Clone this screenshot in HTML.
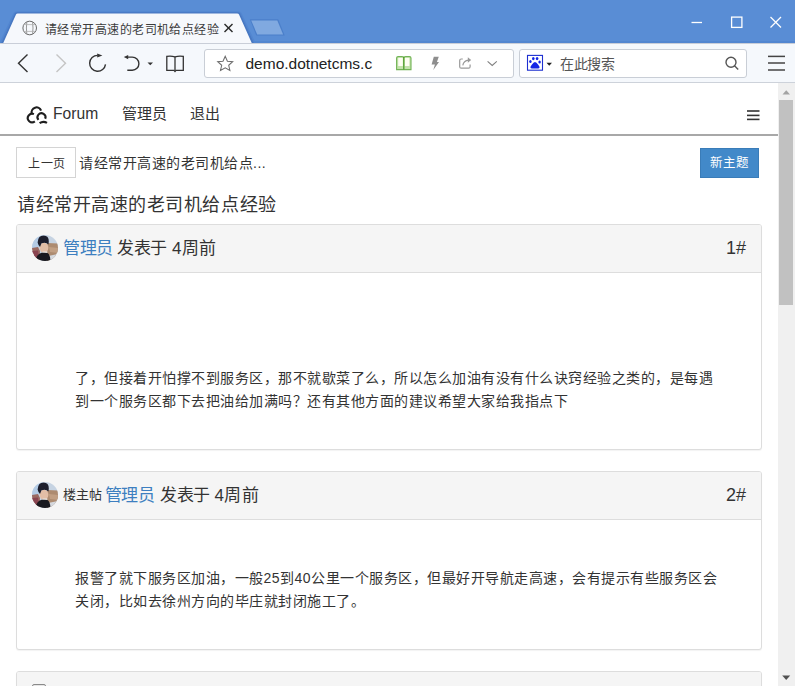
<!DOCTYPE html>
<html lang="zh-CN"><head><meta charset="utf-8">
<style>
*{margin:0;padding:0;box-sizing:border-box}
html,body{width:800px;height:686px;overflow:hidden;background:#fff;font-family:"Liberation Sans",sans-serif;color:#333}
.a{position:absolute}
.nw{white-space:nowrap}
.panel{position:absolute;left:16px;width:746px;border:1px solid #ddd;border-radius:3px;background:#fff;box-shadow:0 1px 1px rgba(0,0,0,.05)}
.ph{position:absolute;left:0;top:0;right:0;background:#f5f5f5;border-bottom:1px solid #ddd;border-radius:2px 2px 0 0}
.txt{font-size:14px;letter-spacing:.5px;line-height:23px;color:#333}
.hd{font-size:17px;letter-spacing:-.35px;line-height:20px;color:#333}
</style></head><body>
<!-- title bar -->
<div class="a" style="left:0;top:0;width:795px;height:43px;background:#598dd5"></div>
<div class="a" style="left:0;top:41px;width:795px;height:2px;background:#5286d0"></div>
<svg class="a" style="left:0;top:0" width="800" height="44">
  <path d="M-1 44 L13.5 13 Q14.5 11.3 17 11.3 L238 11.3 Q240.5 11.3 241.5 13 L256 44 Z" fill="#5286d0"/><path d="M0.8 44 L14.8 13.6 Q15.5 12.2 17.5 12.2 L237.5 12.2 Q239.5 12.2 240.2 13.6 L254.3 44 Z" fill="#4878c2"/>
  <path d="M2.8 44 L16 14.5 Q16.4 13.5 17.8 13.5 L237.2 13.5 Q238.6 13.5 239 14.5 L252.2 44 Z" fill="#f6f8fc"/>
  <path d="M249.8 19.3 L278.2 19.3 L284.8 35.5 L256.3 35.5 Z" fill="#4b7fca"/><path d="M251.2 20.4 L277.3 20.4 L283.1 34.4 L257.2 34.4 Z" fill="#80a9e0"/>
  <!-- globe -->
  <g fill="none" stroke="#6a6a6a" stroke-width="1">
    <circle cx="29.7" cy="28" r="6.8"/>
  </g>
  <g fill="none" stroke="#8c8c8c" stroke-width="0.9">
    <path d="M26.8 22 Q26 28 26.8 34"/><path d="M32.6 22 Q33.4 28 32.6 34"/>
  </g>
  <g fill="none" stroke="#b0b0b0" stroke-width="0.8">
    <line x1="24.2" y1="24.6" x2="35.2" y2="24.6"/><line x1="24.2" y1="31.4" x2="35.2" y2="31.4"/>
  </g>
  <!-- close x -->
  <g stroke="#2a2a2a" stroke-width="1.4">
    <line x1="224.5" y1="24" x2="232.5" y2="32"/><line x1="232.5" y1="24" x2="224.5" y2="32"/>
  </g>
  <!-- window controls -->
  <g stroke="#fff" stroke-width="1.3" fill="none">
    <line x1="691.5" y1="22.5" x2="702" y2="22.5"/>
    <rect x="731.6" y="17.1" width="10.3" height="10.3"/>
    <line x1="770.5" y1="17" x2="781" y2="27.5"/><line x1="781" y1="17" x2="770.5" y2="27.5"/>
  </g>
</svg>
<div class="a nw" style="left:45px;top:22px;font-size:12px;letter-spacing:.45px;line-height:16px;color:#3c3c3c">请经常开高速的老司机给点经验</div>
<!-- toolbar -->
<div class="a" style="left:0;top:43px;width:795px;height:40px;background:#f5f8fc;border-top:1px solid #c9ced8;border-bottom:1px solid #cdd2da"></div>
<svg class="a" style="left:0;top:43px" width="800" height="40">
  <polyline points="27.5,11.5 18.5,20.2 27.5,29" fill="none" stroke="#333" stroke-width="1.4"/>
  <polyline points="56.5,11.5 65.5,20.2 56.5,29" fill="none" stroke="#c5c5c5" stroke-width="1.4"/>
  <!-- reload -->
  <path d="M97.6 12.35 A7.95 7.95 0 1 0 105.5 21.3" fill="none" stroke="#333" stroke-width="1.4"/>
  <path d="M97.2 10.4 L102.4 12.4 L97.2 14.6 Z" fill="#333"/>
  <!-- undo -->
  <path d="M126.5 14.1 L132.3 14.1 A6.6 6.6 0 0 1 132.3 27.3 L127.3 27.3" fill="none" stroke="#333" stroke-width="1.4"/>
  <path d="M123.8 14.1 L128.2 11.9 L128.2 16.3 Z" fill="#333"/>
  <path d="M147.5 19.5 L153 19.5 L150.25 22.3 Z" fill="#333"/>
  <!-- book -->
  <g fill="none" stroke="#333" stroke-width="1.3">
    <path d="M166.8 13.4 Q171 12.6 175 13.9 Q179 12.6 183.3 13.4 L183.3 27.4 L176 27.4 L175 28.5 L174 27.4 L166.8 27.4 Z"/>
    <line x1="175" y1="13.9" x2="175" y2="27.6"/>
  </g>
</svg>
<!-- address box -->
<div class="a" style="left:204px;top:49px;width:310px;height:28.5px;background:#fff;border:1px solid #c9ced6;border-radius:3px"></div>
<svg class="a" style="left:204px;top:49px" width="310" height="28">
  <path d="M21.2 7.3 L23.4 12.2 L28.7 12.7 L24.7 16.3 L25.9 21.5 L21.2 18.8 L16.5 21.5 L17.7 16.3 L13.7 12.7 L19 12.2 Z" fill="none" stroke="#6d6d6d" stroke-width="1.05"/>
  <!-- green book -->
  <path d="M192.6 9 Q192.6 7.6 194.2 7.6 L198 7.6 Q199.8 7.6 199.8 9 Q199.8 7.6 201.6 7.6 L205.4 7.6 Q207 7.6 207 9 L207 20.6 L192.6 20.6 Z" fill="#c3e2ab" stroke="#72b356" stroke-width="1.1"/>
  <rect x="194.2" y="8.8" width="4.6" height="8.2" fill="#fdfdf2"/>
  <rect x="200.8" y="8.8" width="4.6" height="8.2" fill="#fdfdf2"/>
  <line x1="199.8" y1="8" x2="199.8" y2="20.6" stroke="#4e9c2b" stroke-width="1.3"/>
  <!-- lightning -->
  <path d="M229.8 7.8 L234.8 7.8 L232.9 13 L235 13 L229.3 21 L230.9 15.6 L227.6 15.6 Z" fill="#8e8e8e"/>
  <!-- share -->
  <g fill="none" stroke="#999" stroke-width="1.2">
    <path d="M258.8 10 L257.2 10 Q255.7 10 255.7 11.5 L255.7 17.7 Q255.7 19.2 257.2 19.2 L264.6 19.2 Q266.1 19.2 266.1 17.7 L266.1 15.6"/>
    <path d="M258.8 16.4 Q259.6 11.6 264.6 11.1"/>
  </g>
  <path d="M263.8 8.3 L267.2 11.1 L263.8 13.8 Z" fill="#999"/>
  <polyline points="283.6,12.4 288.2,16.5 292.8,12.4" fill="none" stroke="#808080" stroke-width="1.1"/>
</svg>
<div class="a nw" style="left:245.5px;top:53.5px;font-size:15.5px;line-height:20px;color:#222">demo.dotnetcms.c</div>
<!-- search box -->
<div class="a" style="left:519px;top:49px;width:228px;height:28.5px;background:#fff;border:1px solid #c9ced6;border-radius:3px"></div>
<svg class="a" style="left:519px;top:49px" width="228" height="28">
  <rect x="8.5" y="6.4" width="15" height="14.8" fill="#fff" stroke="#1d2fd0" stroke-width="1.1"/>
  <g fill="#1426e6">
    <ellipse cx="14.3" cy="9.6" rx="1.3" ry="1.6"/><ellipse cx="18.1" cy="9.6" rx="1.3" ry="1.6"/>
    <ellipse cx="11.4" cy="12.6" rx="1.2" ry="1.5"/><ellipse cx="20.6" cy="13.1" rx="1.2" ry="1.5"/>
    <path d="M16 12.9 Q14.5 13 13 15.5 L11.6 17.4 Q10.8 19.3 12.8 19.4 L19.2 19.4 Q21.2 19.3 20.4 17.4 L19 15.5 Q17.5 13 16 12.9 Z"/>
  </g>
  <path d="M27.5 13.8 L33 13.8 L30.25 16.7 Z" fill="#222"/>
  <g fill="none" stroke="#555" stroke-width="1.4">
    <circle cx="212" cy="13.3" r="5"/><line x1="215.5" y1="16.8" x2="219.2" y2="20.5"/>
  </g>
</svg>
<div class="a nw" style="left:560px;top:55px;font-size:14px;letter-spacing:-.5px;line-height:18px;color:#555">在此搜索</div>
<svg class="a" style="left:760px;top:43px" width="35" height="40">
  <g stroke="#444" stroke-width="1.5"><line x1="8" y1="13.4" x2="25" y2="13.4"/><line x1="8" y1="20" x2="25" y2="20"/><line x1="8" y1="27" x2="25" y2="27"/></g>
</svg>
<div class="a" style="left:795px;top:0;width:5px;height:686px;background:#fff"></div>

<!-- nav -->
<svg class="a" style="left:20px;top:100px" width="32" height="30">
  <g fill="none" stroke="#1e1e1e" stroke-width="2.1">
    <path d="M11.77 13.52 A4.90 4.90 0 0 1 21.10 10.57"/>
    <path d="M13.92 14.10 A4.30 4.30 0 1 0 14.81 21.34"/>
    <path d="M18.48 19.87 A4.00 4.00 0 1 1 25.21 18.75"/>
    <path d="M19.6 23.2 Q23.2 20.6 27 22.9"/>
  </g>
</svg>
<div class="a nw" style="left:52.5px;top:104px;font-size:17px;line-height:20px;color:#333;transform:scaleX(.92);transform-origin:0 0">Forum</div>
<div class="a nw" style="left:122px;top:104px;font-size:15px;line-height:20px;color:#333">管理员</div>
<div class="a nw" style="left:190px;top:104px;font-size:15px;line-height:20px;color:#333">退出</div>
<svg class="a" style="left:745px;top:105px" width="16" height="20">
  <g stroke="#333" stroke-width="1.6"><line x1="2" y1="6" x2="14.5" y2="6"/><line x1="2" y1="10.4" x2="14.5" y2="10.4"/><line x1="2" y1="14.4" x2="14.5" y2="14.4"/></g>
</svg>
<div class="a" style="left:0;top:134px;width:778px;height:2px;background:#a8a8a8"></div>

<div class="a" style="left:16px;top:147px;width:60px;height:31px;border:1px solid #d4d4d4;background:#fff"></div>
<div class="a nw" style="left:28px;top:156px;font-size:12px;letter-spacing:.5px;line-height:16px;color:#333">上一页</div>
<div class="a nw" style="left:79px;top:154px;font-size:14px;letter-spacing:.5px;line-height:18px;color:#333">请经常开高速的老司机给点...</div>
<div class="a" style="left:700px;top:147.5px;width:59px;height:30.5px;border:1px solid #3a7cb8;background:#4289c9"></div>
<div class="a nw" style="left:710px;top:155px;font-size:12.5px;line-height:16px;color:#fff">新主题</div>
<div class="a nw" style="left:17px;top:193.5px;font-size:18px;letter-spacing:.55px;line-height:22px;color:#333">请经常开高速的老司机给点经验</div>

<!-- panel 1 -->
<div class="panel" style="top:224px;height:226px"><div class="ph" style="height:48px"></div></div>
<svg class="a" style="left:32px;top:235px" width="26" height="26"><use href="#avatar"/></svg>
<div class="a nw hd" style="left:63px;top:239px;color:#3d7fc0">管理员</div>
<div class="a nw hd" style="left:117px;top:239px">发表于</div>
<div class="a nw hd" style="left:172px;top:239px;letter-spacing:.3px">4周前</div>
<div class="a nw" style="left:726px;top:237.5px;font-size:18px;line-height:20px">1#</div>
<div class="a nw txt" style="left:75px;top:367px">了，但接着开怕撑不到服务区，那不就歇菜了么，所以怎么加油有没有什么诀窍经验之类的，是每遇</div>
<div class="a nw txt" style="left:75px;top:390px">到一个服务区都下去把油给加满吗？还有其他方面的建议希望大家给我指点下</div>

<!-- panel 2 -->
<div class="panel" style="top:471px;height:179px"><div class="ph" style="height:48px"></div></div>
<svg class="a" style="left:32px;top:482px" width="26" height="26"><use href="#avatar"/></svg>
<div class="a nw" style="left:63px;top:487px;font-size:13px;line-height:16px">楼主帖</div>
<div class="a nw hd" style="left:104.5px;top:486px;color:#3d7fc0">管理员</div>
<div class="a nw hd" style="left:160px;top:486px">发表于</div>
<div class="a nw hd" style="left:214.5px;top:486px;letter-spacing:.3px">4周前</div>
<div class="a nw" style="left:726px;top:484.5px;font-size:18px;line-height:20px">2#</div>
<div class="a nw txt" style="left:75px;top:567px">报警了就下服务区加油，一般25到40公里一个服务区，但最好开导航走高速，会有提示有些服务区会</div>
<div class="a nw txt" style="left:75px;top:590px">关闭，比如去徐州方向的毕庄就封闭施工了。</div>

<!-- panel 3 -->
<div class="panel" style="top:671px;height:60px"><div class="ph" style="height:48px"></div></div>
<div class="a" style="left:32px;top:684px;width:13.5px;height:10px;border:1.3px solid #8a8a8a;border-radius:2px;background:#e6e6e6"></div>

<!-- scrollbar -->
<div class="a" style="left:778px;top:83px;width:17px;height:603px;background:#f0f0f0"></div>
<svg class="a" style="left:778px;top:83px" width="17" height="603">
  <path d="M4.5 11.5 L12 11.5 L8.25 7.3 Z" fill="#a3a3a3"/>
  <rect x="1" y="17" width="14" height="205" fill="#c1c1c1"/>
  <path d="M4.2 592.5 L12.2 592.5 L8.2 597 Z" fill="#505050"/>
</svg>

<svg width="0" height="0" style="position:absolute">
  <defs>
    <clipPath id="avc"><circle cx="13" cy="13" r="13"/></clipPath>
    <g id="avatar">
      <g clip-path="url(#avc)">
        <rect width="26" height="26" fill="#c6d3e2"/>
        <path d="M0 0 H11 L9 9 L6 13 L0 15 Z" fill="#b3cbe5"/>
        <path d="M15 8 L26 8.5 V26 H15 Z" fill="#ad8b70"/>
        <path d="M17 12 L26 13 V18 L18 17 Z" fill="#c19f83"/>
        <path d="M0 13 L6 12 L8 16 L7.5 26 H0 Z" fill="#9a6a62"/>
        <path d="M0 16 L6 15.5 L7 23 L3 24 L0 22 Z" fill="#8a4450"/>
        <path d="M16 21 L26 19 V26 H17 Z" fill="#d5d9df"/>
        <ellipse cx="12" cy="12.8" rx="4.4" ry="5" fill="#e2bea6"/>
        <path d="M10.5 16.5 L15.5 16.5 L15 18.5 L11 18.5 Z" fill="#e8e4e0"/>
        <path d="M5.6 7.5 Q6 0.8 11.5 0.6 Q17 0.8 16.8 6.5 L16.5 9.5 Q14 6.8 9.5 8.3 L8 12 L6.5 10 Z" fill="#1d1e2c"/>
        <path d="M3.5 26 Q4.5 19 9.5 17.8 Q13 17.5 15.5 18 Q18 19 18.5 26 Z" fill="#19191f"/>
      </g>
    </g>
  </defs>
</svg>
</body></html>
